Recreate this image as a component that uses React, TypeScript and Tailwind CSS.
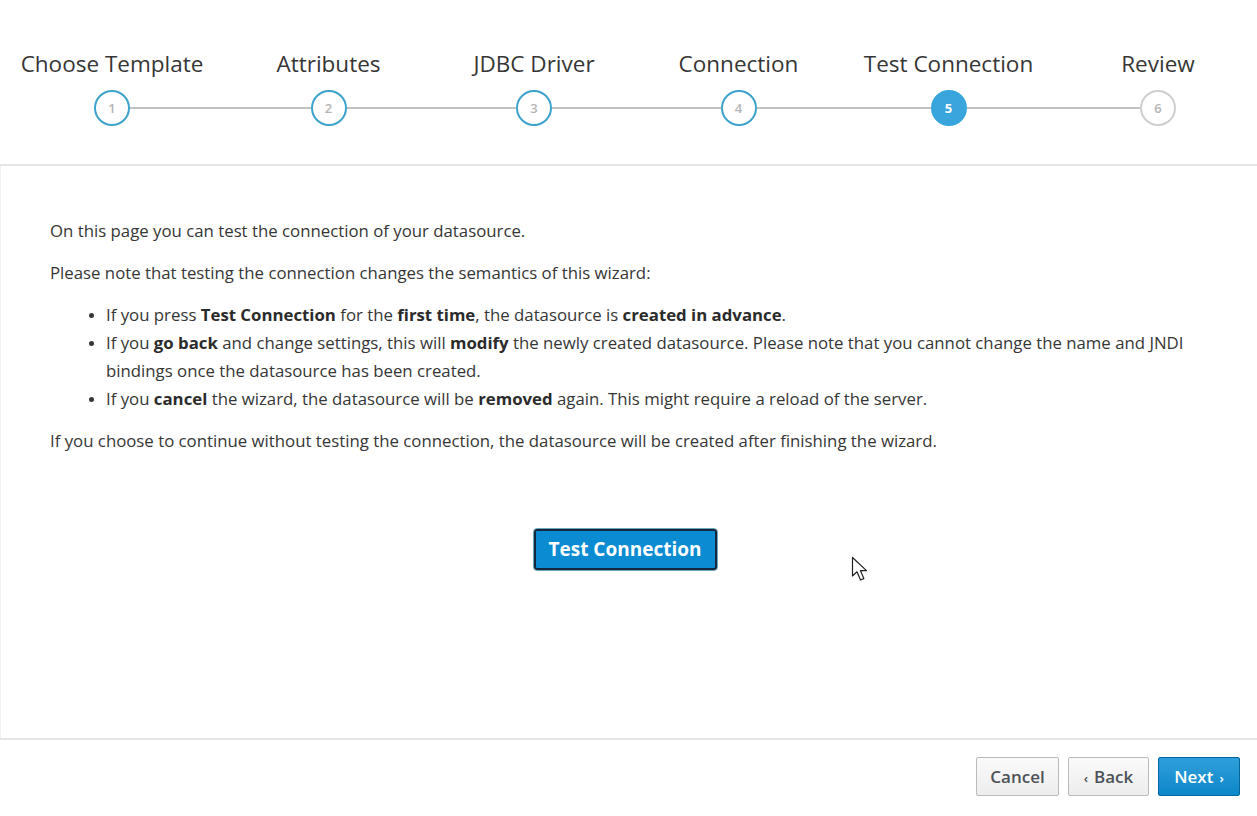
import React from "react";

const steps = [
  { label: "Choose Template", w: "w-[224px]", state: "done" },
  { label: "Attributes", w: "w-[209px]", state: "done" },
  { label: "JDBC Driver", w: "w-[202px]", state: "done" },
  { label: "Connection", w: "w-[207px]", state: "done" },
  { label: "Test Connection", w: "w-[213px]", state: "active" },
  { label: "Review", w: "w-[206px]", state: "todo" },
];

function Step({ label, w, state, idx }: { label: string; w: string; state: string; idx: number }) {
  const first = idx === 0;
  const last = idx === steps.length - 1;
  const circle =
    state === "active"
      ? "bg-[#39a5dc] border-[#39a5dc] text-white font-bold"
      : state === "done"
      ? "bg-white border-[#3ea3cc] text-[#b5b5b5] font-semibold"
      : "bg-white border-[#cfcfcf] text-[#b5b5b5] font-semibold";
  return (
    <div className={`${w} shrink-0 flex flex-col items-center`}>
      <div className="h-[30px] leading-[30px] text-[22.5px] text-[#363636] whitespace-nowrap">{label}</div>
      <div className="mt-[11px] h-[36px] w-full flex items-center">
        <div className={`flex-1 h-[2px] ${first ? "bg-transparent" : "bg-[#c2c2c2]"}`} />
        <div
          className={`w-[36px] h-[36px] rounded-full border-[2.5px] flex items-center justify-center text-[13px] leading-none ${circle}`}
        >
          {idx + 1}
        </div>
        <div className={`flex-1 h-[2px] ${last ? "bg-transparent" : "bg-[#c2c2c2]"}`} />
      </div>
    </div>
  );
}

const B = ({ children }: { children: React.ReactNode }) => (
  <b className="font-bold text-[#2b2b2b]">{children}</b>
);

function Li({ children }: { children: React.ReactNode }) {
  return (
    <li className="flex">
      <span className="w-[18px] shrink-0 -ml-[18px] flex items-center h-[28px]">
        <span className="w-[5px] h-[5px] rounded-full bg-[#363636] ml-[1px]" />
      </span>
      <span>{children}</span>
    </li>
  );
}

export default function App() {
  return (
    <div
      className="relative w-[1257px] h-[816px] bg-white overflow-hidden text-[#363636]"
      style={{ fontFamily: '"Open Sans", "Liberation Sans", sans-serif' }}
    >
      {/* Header with steps */}
      <div className="h-[166px] border-b-2 border-[#e6e6e6] pt-[49px] overflow-hidden">
        <div className="flex">
          {steps.map((s, i) => (
            <Step key={s.label} label={s.label} w={s.w} state={s.state} idx={i} />
          ))}
        </div>
      </div>

      {/* Body */}
      <div className="h-[572px] border-l border-[#f1f1f1] pl-[49px] pr-[27px] pt-[51px] flex flex-col text-[16.8px] leading-[28px]">
        <p className="mb-[14px]">On this page you can test the connection of your datasource.</p>
        <p className="mb-[14px]">Please note that testing the connection changes the semantics of this wizard:</p>
        <ul className="pl-[56px] mb-[14px]">
          <Li>
            If you press <B>Test Connection</B> for the <B>first time</B>, the datasource is{" "}
            <B>created in advance</B>.
          </Li>
          <Li>
            If you <B>go back</B> and change settings, this will <B>modify</B> the newly created datasource. Please
            note that you cannot change the name and JNDI bindings once the datasource has been created.
          </Li>
          <Li>
            If you <B>cancel</B> the wizard, the datasource will be <B>removed</B> again. This might require a reload
            of the server.
          </Li>
        </ul>
        <p>If you choose to continue without testing the connection, the datasource will be created after finishing the wizard.</p>

        <div className="mt-[73px] flex justify-center pr-[30px]">
          <div className="border border-[#6aa6c2] rounded-[4px]">
            <button className="h-[41px] px-[13px] rounded-[3px] border-2 border-[#13283a] bg-[#0b8bd2] text-white text-[19px] font-bold leading-none">
              Test Connection
            </button>
          </div>
        </div>
      </div>

      {/* Footer */}
      <div className="border-t-2 border-[#e6e6e6] pt-[17px] pr-[17px] flex justify-end gap-[9px]">
        <button className="w-[83px] h-[39px] rounded-[2px] border border-[#bbbbbb] bg-gradient-to-b from-[#fafafa] to-[#ededed] text-[17px] font-semibold text-[#4d5258]">
          Cancel
        </button>
        <button className="w-[81px] h-[39px] rounded-[2px] border border-[#bbbbbb] bg-gradient-to-b from-[#fafafa] to-[#ededed] text-[17px] font-semibold text-[#4d5258]">
          <span className="text-[13px] mr-[6px]">‹</span>Back
        </button>
        <button className="w-[82px] h-[39px] rounded-[2px] border border-[#00659c] bg-gradient-to-b from-[#2ea0db] to-[#0a86c8] text-[17px] font-semibold text-white">
          Next<span className="text-[13px] ml-[6px]">›</span>
        </button>
      </div>

      {/* Mouse cursor */}
      <svg className="absolute left-[851px] top-[556px]" width="20" height="28" viewBox="0 0 20 28">
        <path
          d="M1.5 1.5 L1.5 20 L6 15.8 L9.5 24 L12.8 22.6 L9.4 14.6 L15.5 14.6 Z"
          fill="white"
          stroke="#222"
          strokeWidth="1.2"
          strokeLinejoin="round"
        />
      </svg>
    </div>
  );
}
